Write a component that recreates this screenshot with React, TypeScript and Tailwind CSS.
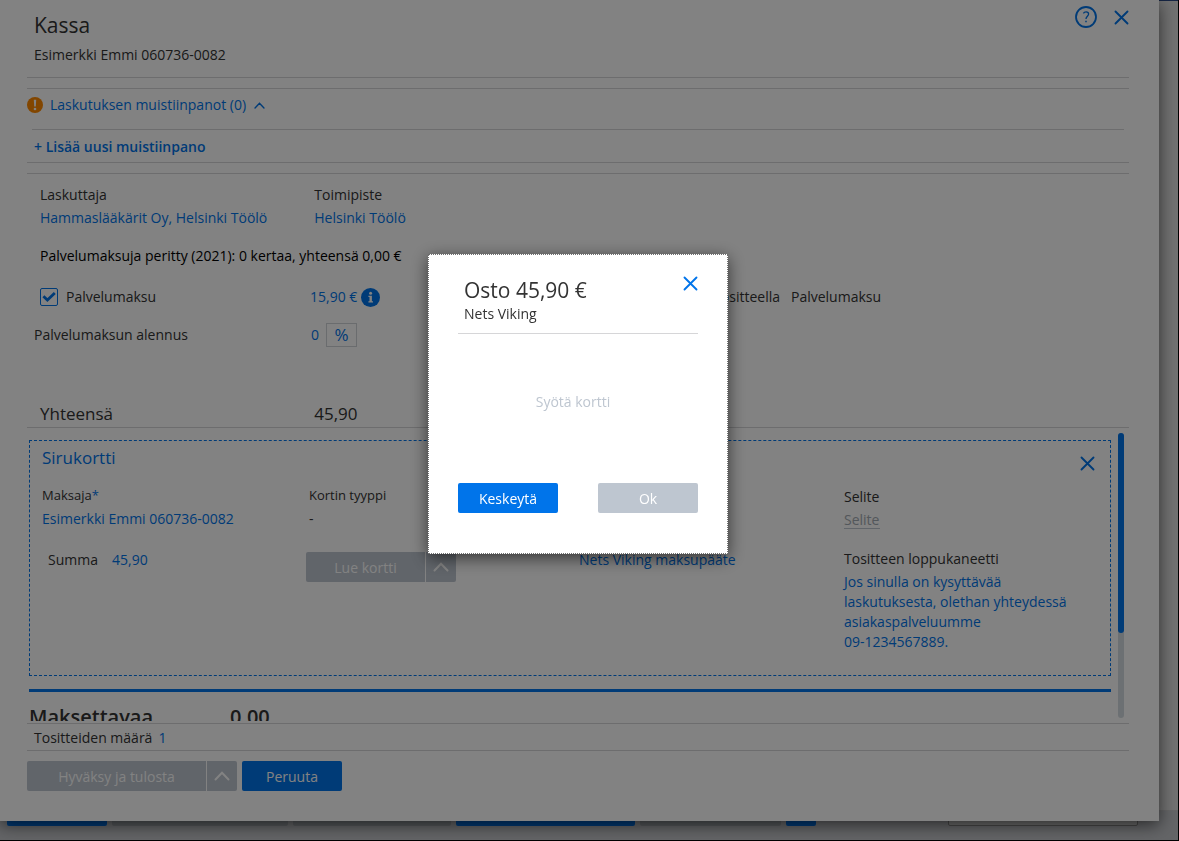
import React, { useState } from 'react';

interface IconProps {
  className?: string;
}

const CloseIcon: React.FC<IconProps> = ({ className }) => (
  <svg className={className} viewBox="0 0 16 16" fill="none" stroke="currentColor" strokeWidth="2" strokeLinecap="round">
    <path d="M1.6 1.6L14.4 14.4M14.4 1.6L1.6 14.4" />
  </svg>
);

const ChevronUpIcon: React.FC<IconProps> = ({ className }) => (
  <svg className={className} viewBox="0 0 16 10" fill="none" stroke="currentColor" strokeWidth="2" strokeLinecap="round">
    <path d="M1.5 8.5L8 1.8L14.5 8.5" />
  </svg>
);

const HelpIcon: React.FC<IconProps> = ({ className }) => (
  <svg className={className} viewBox="0 0 22 22" fill="none" stroke="currentColor">
    <circle cx="11" cy="11" r="10" strokeWidth="1.8" />
    <path d="M8.4 7.4C9 6.2 10 5.8 11.1 5.8C12.6 5.8 13.6 6.7 13.6 8C13.6 10.1 11 10.4 11 13" strokeWidth="1.3" />
    <path d="M11 14.8V16.2" strokeWidth="1.5" />
  </svg>
);

const WarningIcon: React.FC<IconProps> = ({ className }) => (
  <svg className={className} viewBox="0 0 16 16">
    <circle cx="8" cy="8" r="8" fill="#ff8a00" />
    <path d="M6.8 2.8H9.2L8.8 9.6H7.2Z" fill="#fff" />
    <circle cx="8" cy="12" r="1.3" fill="#fff" />
  </svg>
);

const InfoIcon: React.FC<IconProps> = ({ className }) => (
  <svg className={className} viewBox="0 0 19 19">
    <circle cx="9.5" cy="9.5" r="9.5" fill="#0074ea" />
    <circle cx="9.6" cy="5.2" r="1.5" fill="#fff" />
    <path d="M7.4 7.8H10.9V13.2H12V14.5H7.4V13.2H8.5V9.1H7.4Z" fill="#fff" />
  </svg>
);

interface SplitButtonProps {
  label: string;
  className: string;
}

const SplitButton: React.FC<SplitButtonProps> = ({ label, className }) => (
  <div className="flex gap-px">
    <button disabled className={`h-[30px] rounded-l-xs bg-[#bec6d0] text-white ${className}`}>
      {label}
    </button>
    <button
      disabled
      aria-label={label}
      className="flex h-[30px] w-[30px] items-center justify-center rounded-r-xs bg-[#bec6d0] text-white"
    >
      <ChevronUpIcon className="h-[10px] w-4" />
    </button>
  </div>
);

const BackgroundPage: React.FC = () => (
  <div className="col-start-1 row-start-1 flex flex-col border-t border-[#2c4a86] bg-[#dedede]">
    <div className="flex-1" />
    <div className="flex h-[30px] items-start gap-[5px] border-t border-[#c8c8ca] bg-[#c4c6ca] pr-10 pl-[7px]">
      <div className="h-[15px] w-[100px] rounded-b-xs bg-[#0074ea]" />
      <div className="h-[15px] w-[176px] rounded-b-xs bg-[#a8aeb4]" />
      <div className="h-[15px] w-[158px] rounded-b-xs bg-[#a8aeb4]" />
      <div className="h-[15px] w-[179px] rounded-b-xs bg-[#0074ea]" />
      <div className="h-[15px] w-[141px] rounded-b-xs bg-[#a8aeb4]" />
      <div className="h-[15px] w-[30px] rounded-b-xs bg-[#0074ea]" />
      <div className="ml-auto h-[15px] w-[190px] rounded-b-xs border border-[#8c8c8c] bg-[#d4d4d4]" />
    </div>
  </div>
);

const NotesSection: React.FC = () => (
  <section className="mt-[10px] border-y border-[#d6d6d8]">
    <div className="h-10">
      <button className="flex h-8 items-center text-[#0074ea]">
        <WarningIcon className="h-4 w-4" />
        <span className="ml-[7px]">Laskutuksen muistiinpanot (0)</span>
        <ChevronUpIcon className="ml-2 h-[7px] w-[11px]" />
      </button>
    </div>
    <div className="mx-[5px] border-t border-[#d6d6d8]">
      <button className="h-8 px-[2px] pt-px font-semibold text-[#0074ea]">+ Lisää uusi muistiinpano</button>
    </div>
  </section>
);

const FeeSection: React.FC = () => {
  const [feeChecked, setFeeChecked] = useState<boolean>(true);
  const [discount, setDiscount] = useState<string>('0');

  return (
    <section className="mt-[10px] border-y border-[#d6d6d8] pt-[9px] pb-px leading-6">
      <div className="grid grid-cols-4 pl-[13px]">
        <div>
          <div className="h-[23px]">Laskuttaja</div>
          <a href="#" className="block h-[23px] whitespace-nowrap text-[#0074ea]">
            Hammaslääkärit Oy, Helsinki Töölö
          </a>
        </div>
        <div className="pl-[2px]">
          <div className="h-[23px]">Toimipiste</div>
          <a href="#" className="block h-[23px] text-[#0074ea]">
            Helsinki Töölö
          </a>
        </div>
      </div>

      <p className="mt-[15px] pl-[13px] text-black">Palvelumaksuja peritty (2021): 0 kertaa, yhteensä 0,00 €</p>

      <div className="mt-[17px] flex items-center pl-[13px]">
        <label className="flex w-[270px] items-center gap-2">
          <span className="relative flex h-[18px] w-[18px]">
            <input
              type="checkbox"
              checked={feeChecked}
              onChange={(e) => setFeeChecked(e.target.checked)}
              className="h-[18px] w-[18px] appearance-none rounded-xs border border-[#0074ea]"
            />
            {feeChecked && (
              <svg
                className="pointer-events-none absolute inset-0 h-[18px] w-[18px] text-[#0074ea]"
                viewBox="0 0 18 18"
                fill="none"
                stroke="currentColor"
                strokeWidth="2.8"
              >
                <path d="M3.4 8.2L7.4 12L14.8 5" />
              </svg>
            )}
          </span>
          Palvelumaksu
        </label>
        <div className="flex w-[481px] items-center gap-1">
          <span className="text-[#0074ea]">15,90 €</span>
          <InfoIcon className="h-[19px] w-[19px]" />
          <span className="ml-auto pr-[11px]">tositteella</span>
        </div>
        <span>Palvelumaksu</span>
      </div>

      <div className="mt-[14px] flex items-center pl-[7px]">
        <label htmlFor="discount" className="w-[277px]">
          Palvelumaksun alennus
        </label>
        <input
          id="discount"
          value={discount}
          onChange={(e) => setDiscount(e.target.value)}
          className="h-6 w-[15px] text-[#0074ea] outline-none"
        />
        <button className="h-6 w-[31px] border border-[#d0d4d8] text-[17px] leading-5 text-[#0074ea]">%</button>
      </div>

      <div className="mt-[55px] grid grid-cols-4 pl-[13px] text-[17px]">
        <span>Yhteensä</span>
        <span className="pl-[2px]">45,90</span>
      </div>
    </section>
  );
};

const CardPayment: React.FC = () => {
  const [amount, setAmount] = useState<string>('45,90');
  const [note, setNote] = useState<string>('');

  return (
    <div className="mt-[7px] h-[236px] border border-dashed border-[#0074ea] pl-3">
      <div className="flex h-[43px] items-start justify-between pr-[15px]">
        <h2 className="text-[17px] leading-[34px] text-[#0074ea]">Sirukortti</h2>
        <button aria-label="Sirukortti" className="mt-[15px] text-[#0074ea]">
          <CloseIcon className="h-[15px] w-[15px]" />
        </button>
      </div>
      <div className="grid grid-cols-[267fr_270fr_265fr_266fr] leading-[23px]">
        <div>
          <div className="text-[13px]">
            Maksaja<span className="text-[#0074ea]">*</span>
          </div>
          <a href="#" className="text-[#0074ea]">
            Esimerkki Emmi 060736-0082
          </a>
          <div className="mt-[18px] flex pl-[6px]">
            <label htmlFor="amount" className="w-16">
              Summa
            </label>
            <input
              id="amount"
              value={amount}
              onChange={(e) => setAmount(e.target.value)}
              className="h-[23px] w-20 text-[#0074ea] outline-none"
            />
          </div>
        </div>
        <div>
          <div className="text-[13px]">Kortin tyyppi</div>
          <div>-</div>
          <div className="-ml-[3px] mt-[22px]">
            <SplitButton label="Lue kortti" className="w-[119px]" />
          </div>
        </div>
        <div className="pt-16">
          <a href="#" className="text-[#0074ea]">
            Nets Viking maksupääte
          </a>
        </div>
        <div className="pt-px">
          <label htmlFor="note" className="block">
            Selite
          </label>
          <input
            id="note"
            value={note}
            placeholder="Selite"
            onChange={(e) => setNote(e.target.value)}
            className="mt-[2px] block h-[19px] w-9 border-b border-[#bec6d0] outline-none placeholder:text-[#a4abb3]"
          />
          <div className="mt-[18px]">Tositteen loppukaneetti</div>
          <p className="mt-[2px] leading-5 whitespace-nowrap text-[#0074ea]">
            Jos sinulla on kysyttävää
            <br />
            laskutuksesta, olethan yhteydessä
            <br />
            asiakaspalveluumme
            <br />
            09-1234567889.
          </p>
        </div>
      </div>
    </div>
  );
};

const CheckoutPanel: React.FC = () => {
  const [receipts, setReceipts] = useState<string>('1');

  return (
    <main className="col-start-1 row-start-1 mr-[19px] self-start bg-white pr-[30px] pb-[30px] pl-[27px] shadow-[0_4px_16px_rgba(0,0,0,0.6)]">
      <header className="flex h-[78px] justify-between border-b border-[#d6d6d8] pl-[7px]">
        <div>
          <h1 className="mt-[11px] text-[21px] leading-7">Kassa</h1>
          <p className="mt-1 leading-6">Esimerkki Emmi 060736-0082</p>
        </div>
        <div className="flex h-[34px] items-center gap-[17px] text-[#0074ea]">
          <button aria-label="?">
            <HelpIcon className="h-[22px] w-[22px]" />
          </button>
          <button aria-label="Kassa">
            <CloseIcon className="h-[15px] w-[15px]" />
          </button>
        </div>
      </header>

      <NotesSection />
      <FeeSection />

      <div className="mt-[5px] mb-[2px] flex h-[288px] gap-[7px] pr-[5px] pl-[2px]">
        <div className="flex-1 overflow-hidden">
          <CardPayment />
          <div className="mt-[13px] flex border-t-3 border-[#0074ea] pt-[10px] text-[20px] leading-[30px] font-semibold">
            <span className="w-[201px]">Maksettavaa</span>
            <span>0.00</span>
          </div>
        </div>
        <div className="h-[285px] w-[6px] rounded-full bg-[#d5dce2]">
          <div className="h-[200px] rounded-full bg-[#0074ea]" />
        </div>
      </div>

      <div className="flex h-7 items-center gap-[6px] border-y border-[#d6d6d8] pt-px pl-[7px]">
        <label htmlFor="receipts">Tositteiden määrä</label>
        <input
          id="receipts"
          value={receipts}
          onChange={(e) => setReceipts(e.target.value)}
          className="h-5 w-10 text-[#0074ea] outline-none"
        />
      </div>

      <footer className="mt-[10px] flex gap-[5px]">
        <SplitButton label="Hyväksy ja tulosta" className="w-[179px] pt-px" />
        <button className="h-[30px] w-[100px] rounded-xs bg-[#0074ea] pt-px text-white">Peruuta</button>
      </footer>
    </main>
  );
};

const PurchaseDialog: React.FC = () => (
  <div className="fixed inset-0 flex items-center justify-center bg-black/49 pr-[23px] pb-[33px]">
    <div
      role="dialog"
      className="flex h-[300px] w-[300px] flex-col border border-dotted border-[#707070] bg-white px-[29px] pb-10 shadow-[0_4px_16px_rgba(0,0,0,0.6)]"
    >
      <div className="flex h-[79px] items-start justify-between border-b border-[#d6d6d8] pl-[6px]">
        <div>
          <h2 className="mt-[21px] text-[21px] leading-7">Osto 45,90 €</h2>
          <p className="leading-5">Nets Viking</p>
        </div>
        <button aria-label="Osto" className="mt-[21px] text-[#0074ea]">
          <CloseIcon className="h-[15px] w-[15px]" />
        </button>
      </div>
      <p className="mt-14 pr-[10px] text-center leading-6 text-[#bec6d0]">Syötä kortti</p>
      <div className="mt-auto flex justify-between text-white">
        <button className="h-[30px] w-[100px] rounded-xs bg-[#0074ea] pt-px">Keskeytä</button>
        <button disabled className="h-[30px] w-[100px] rounded-xs bg-[#bec6d0] pt-px">
          Ok
        </button>
      </div>
    </div>
  </div>
);

const App: React.FC = () => {
  return (
    <div className="grid min-h-screen border-r border-b border-black font-['Open_Sans','Noto_Sans',sans-serif] text-sm text-[#333]">
      <BackgroundPage />
      <CheckoutPanel />
      <PurchaseDialog />
    </div>
  );
};

export default App;
